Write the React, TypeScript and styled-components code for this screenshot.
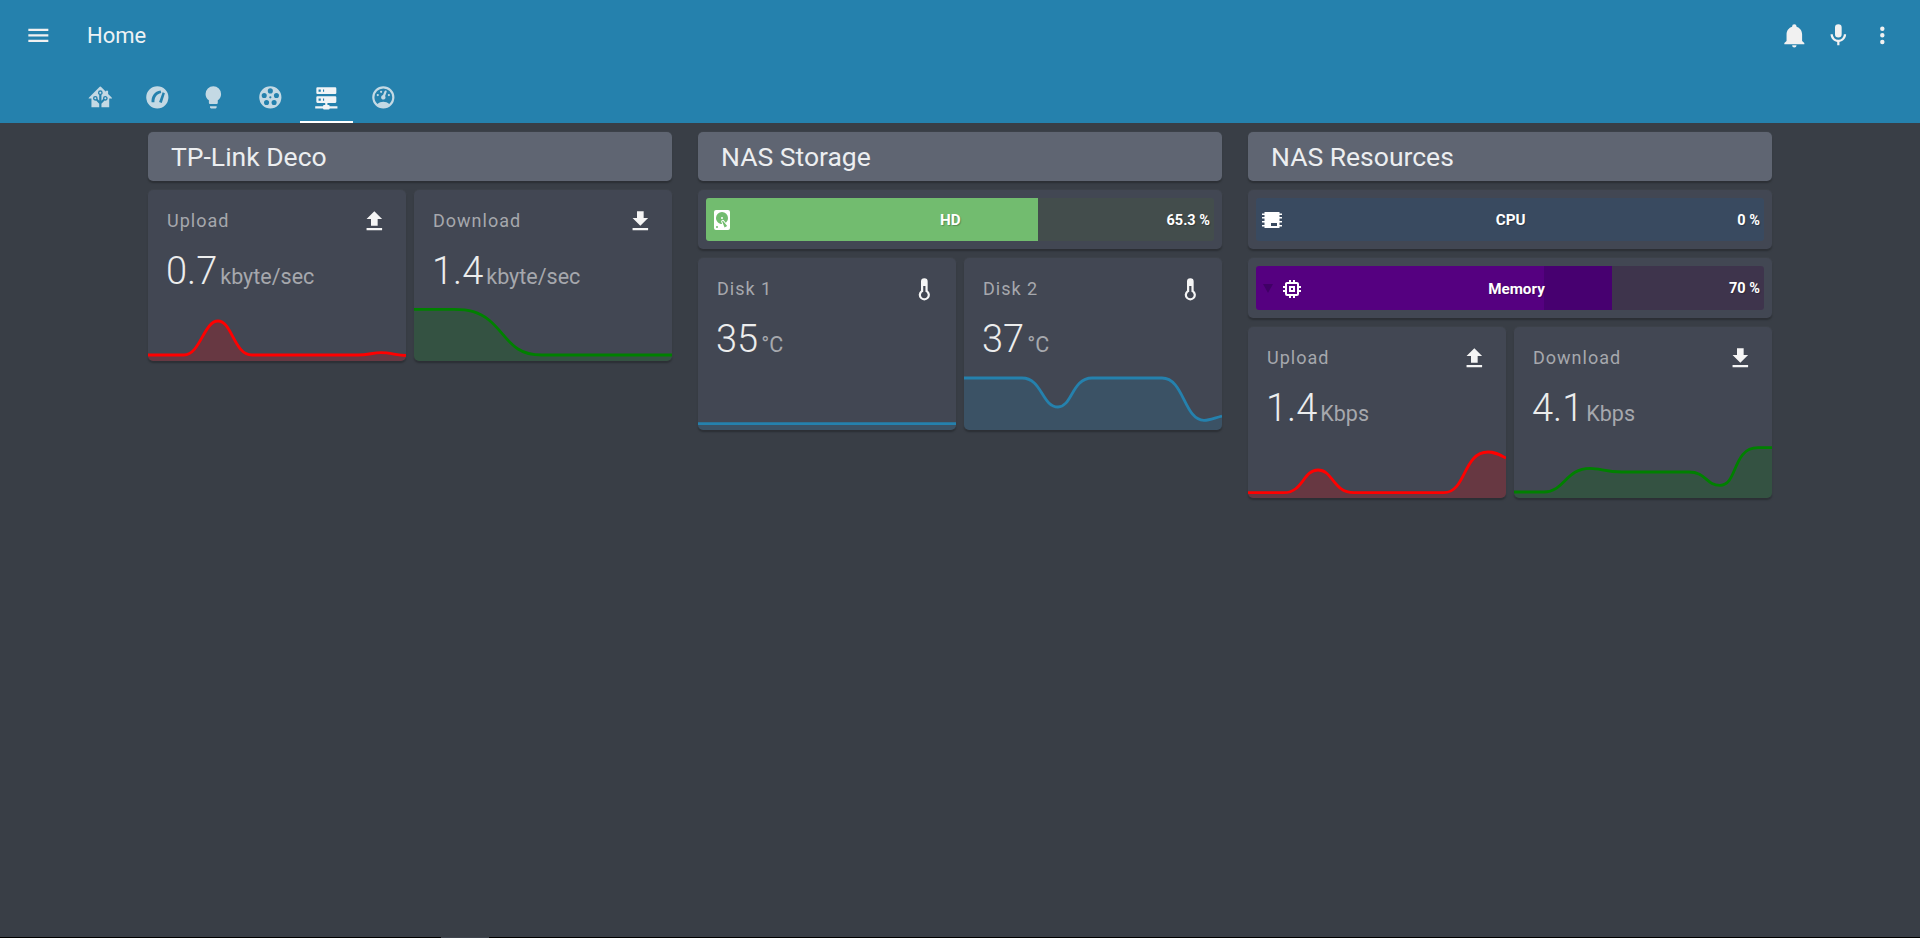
import React from 'react';
import styled, { createGlobalStyle } from 'styled-components';

const ICONS = {
  menu: 'M3,6H21V8H3V6M3,11H21V13H3V11M3,16H21V18H3V16Z',
  bell: 'M21,19V20H3V19L5,17V11C5,7.9 7.03,5.17 10,4.29C10,4.19 10,4.1 10,4A2,2 0 0,1 12,2A2,2 0 0,1 14,4C14,4.1 14,4.19 14,4.29C16.97,5.17 19,7.9 19,11V17L21,19M14,21A2,2 0 0,1 12,23A2,2 0 0,1 10,21',
  mic: 'M12,2A3,3 0 0,1 15,5V11A3,3 0 0,1 12,14A3,3 0 0,1 9,11V5A3,3 0 0,1 12,2M19,11C19,14.53 16.39,17.44 13,17.93V21H11V17.93C7.61,17.44 5,14.53 5,11H7A5,5 0 0,0 12,16A5,5 0 0,0 17,11H19Z',
  dots: 'M12,16A2,2 0 0,1 14,18A2,2 0 0,1 12,20A2,2 0 0,1 10,18A2,2 0 0,1 12,16M12,10A2,2 0 0,1 14,12A2,2 0 0,1 12,14A2,2 0 0,1 10,12A2,2 0 0,1 12,10M12,4A2,2 0 0,1 14,6A2,2 0 0,1 12,8A2,2 0 0,1 10,6A2,2 0 0,1 12,4Z',
  homeAssistant: 'M21.8,13H20V21H13V17.67L15.79,14.88L16.5,15C17.66,15 18.6,14.06 18.6,12.9C18.6,11.74 17.66,10.8 16.5,10.8A2.1,2.1 0 0,0 14.4,12.9L14.5,13.61L13,15.13V9.65C13.66,9.29 14.1,8.6 14.1,7.8A2.1,2.1 0 0,0 12,5.7A2.1,2.1 0 0,0 9.9,7.8C9.9,8.6 10.34,9.29 11,9.65V15.13L9.5,13.61L9.6,12.9A2.1,2.1 0 0,0 7.5,10.8A2.1,2.1 0 0,0 5.4,12.9A2.1,2.1 0 0,0 7.5,15L8.21,14.88L11,17.67V21H4V13H2.25C1.83,13 1.42,13 1.42,12.79C1.43,12.57 1.85,12.15 2.28,11.72L11,3C11.33,2.67 11.67,2.33 12,2.33C12.33,2.33 12.67,2.67 13,3L17,7V6H19V9L21.78,11.78C22.18,12.18 22.59,12.59 22.6,12.8C22.6,13 22.2,13 21.8,13M7.5,12A0.9,0.9 0 0,1 8.4,12.9A0.9,0.9 0 0,1 7.5,13.8A0.9,0.9 0 0,1 6.6,12.9A0.9,0.9 0 0,1 7.5,12M16.5,12C17,12 17.4,12.4 17.4,12.9C17.4,13.4 17,13.8 16.5,13.8A0.9,0.9 0 0,1 15.6,12.9A0.9,0.9 0 0,1 16.5,12M12,6.9C12.5,6.9 12.9,7.3 12.9,7.8C12.9,8.3 12.5,8.7 12,8.7C11.5,8.7 11.1,8.3 11.1,7.8C11.1,7.3 11.5,6.9 12,6.9Z',
  bulb: 'M12,2A7,7 0 0,0 5,9C5,11.38 6.19,13.47 8,14.74V17A1,1 0 0,0 9,18H15A1,1 0 0,0 16,17V14.74C17.81,13.47 19,11.38 19,9A7,7 0 0,0 12,2M9,21A1,1 0 0,0 10,22H14A1,1 0 0,0 15,21V20H9V21Z',
  reel: 'M12 2a10 10 0 1 0 0 20a10 10 0 1 0 0-20ZM9.7 6.2a2.3 2.3 0 1 0 4.6 0a2.3 2.3 0 1 0-4.6 0ZM4.2 10.3a2.3 2.3 0 1 0 4.6 0a2.3 2.3 0 1 0-4.6 0ZM15.2 10.3a2.3 2.3 0 1 0 4.6 0a2.3 2.3 0 1 0-4.6 0ZM6.3 16.7a2.3 2.3 0 1 0 4.6 0a2.3 2.3 0 1 0-4.6 0ZM13.1 16.7a2.3 2.3 0 1 0 4.6 0a2.3 2.3 0 1 0-4.6 0ZM11 12a1 1 0 1 0 2 0a1 1 0 1 0-2 0Z',
  server: 'M13,19H14A1,1 0 0,1 15,20H22V22H15A1,1 0 0,1 14,23H10A1,1 0 0,1 9,22H2V20H9A1,1 0 0,1 10,19H11V17H4A1,1 0 0,1 3,16V12A1,1 0 0,1 4,11H20A1,1 0 0,1 21,12V16A1,1 0 0,1 20,17H13V19M4,3H20A1,1 0 0,1 21,4V8A1,1 0 0,1 20,9H4A1,1 0 0,1 3,8V4A1,1 0 0,1 4,3M9,7H10V5H9V7M9,15H10V13H9V15M5,5V7H7V5H5M5,13V15H7V13H5Z',
  gauge: 'M12,2A10,10 0 0,0 2,12A10,10 0 0,0 12,22A10,10 0 0,0 22,12A10,10 0 0,0 12,2M12,4A8,8 0 0,1 20,12C20,14.4 19,16.5 17.3,18C15.9,16.7 14,16 12,16C10,16 8.2,16.7 6.7,18C5,16.5 4,14.4 4,12A8,8 0 0,1 12,4M14,5.89C13.62,5.9 13.26,6.15 13.1,6.54L11.81,9.77L11.71,10C11,10.13 10.41,10.6 10.14,11.26C9.73,12.29 10.23,13.45 11.26,13.86C12.29,14.27 13.45,13.77 13.86,12.74C14.12,12.08 14,11.32 13.57,10.76L13.67,10.5L14.96,7.29L14.97,7.26C15.17,6.75 14.92,6.17 14.41,5.96C14.28,5.91 14.15,5.89 14,5.89M10,6A1,1 0 0,0 9,7A1,1 0 0,0 10,8A1,1 0 0,0 11,7A1,1 0 0,0 10,6M7,9A1,1 0 0,0 6,10A1,1 0 0,0 7,11A1,1 0 0,0 8,10A1,1 0 0,0 7,9M17,9A1,1 0 0,0 16,10A1,1 0 0,0 17,11A1,1 0 0,0 18,10A1,1 0 0,0 17,9Z',
  dial: 'M12 2a10 10 0 1 0 0 20a10 10 0 1 0 0-20ZM6.8 16.5C6.4 11 9.4 6.6 15 5.8L15.5 8C11.4 8.8 9.2 12 9.4 16.5ZM16.8 7.5L18.8 8.3L16 17L13.6 16.2Z',
  upload: 'M9,16V10H5L12,3L19,10H15V16H9M5,20V18H19V20H5Z',
  download: 'M5,20H19V18H5M19,9H15V3H9V9H5L12,16L19,9Z',
  thermometer: 'M15 13V5A3 3 0 0 0 9 5V13A5 5 0 1 0 15 13ZM13 9V14.2A3 3 0 1 1 11 14.2V9Z',
  harddisk: 'M6,2H18A2,2 0 0,1 20,4V20A2,2 0 0,1 18,22H6A2,2 0 0,1 4,20V4A2,2 0 0,1 6,2M12,4A6,6 0 0,0 6,10C6,13.31 8.69,16 12.1,16L11.22,13.77C10.95,13.29 11.11,12.68 11.59,12.4L12.45,11.9C12.93,11.63 13.54,11.79 13.82,12.27L15.74,14.69C17.12,13.59 18,11.9 18,10A6,6 0 0,0 12,4M12,9A1,1 0 0,1 13,10A1,1 0 0,1 12,11A1,1 0 0,1 11,10A1,1 0 0,1 12,9M7,18A1,1 0 0,0 6,19A1,1 0 0,0 7,20A1,1 0 0,0 8,19A1,1 0 0,0 7,18M12.09,13.27L14.58,19.58L17.17,18.08L12.95,12.77L12.09,13.27Z',
  cpu: 'M4.5 4H19.5V5.5H22V7H19.5V9H22V10.5H19.5V13H22V14.5H19.5V17H22V18.5H19.5V20H4.5V18.5H2V17H4.5V14.5H2V13H4.5V10.5H2V9H4.5V7H2V5.5H4.5ZM11 15V18H17V15Z',
  chip: 'M17,17H7V7H17M21,11V9H19V7C19,5.89 18.1,5 17,5H15V3H13V5H11V3H9V5H7C5.89,5 5,5.89 5,7V9H3V11H5V13H3V15H5V17A2,2 0 0,0 7,19H9V21H11V19H13V21H15V19H17A2,2 0 0,0 19,17V15H21V13H19V11M13,13H11V11H13M15,9H9V15H15V9Z',
};

type IconName = keyof typeof ICONS;

const GlobalStyle = createGlobalStyle`
  html, body {
    margin: 0;
    padding: 0;
    background: #393e46;
  }
  body {
    font-family: Roboto, "Liberation Sans", sans-serif;
  }
`;

const Page = styled.div`
  min-height: 938px;
  display: flex;
  flex-direction: column;
`;

const Header = styled.header`
  background: #2581ad;
  color: #f1f1f1;
`;

const Toolbar = styled.div`
  height: 70px;
  display: flex;
  align-items: center;
  padding: 0 16px;
`;

const Title = styled.div`
  flex: 1;
  margin-left: 27px;
  font-size: 22px;
  color: #eef2f5;
`;

const IconButton = styled.div`
  width: 44px;
  height: 44px;
  display: flex;
  align-items: center;
  justify-content: center;
`;

const Tabs = styled.div`
  height: 53px;
  display: flex;
  padding: 1px 0 0 72px;
  box-sizing: border-box;
`;

const Tab = styled.div<{ $active?: boolean }>`
  position: relative;
  width: 56.6px;
  display: flex;
  align-items: center;
  justify-content: center;
  color: ${(p) => (p.$active ? '#f1f4f6' : '#c4d9e4')};

  &::after {
    content: '';
    display: ${(p) => (p.$active ? 'block' : 'none')};
    position: absolute;
    left: 2px;
    right: 2px;
    bottom: 0;
    height: 2px;
    background: #fff;
  }
`;

const Svg = styled.svg<{ $size: number }>`
  display: block;
  flex: none;
  width: ${(p) => p.$size}px;
  height: ${(p) => p.$size}px;
  fill: currentColor;
`;

const Main = styled.main`
  flex: 1;
  display: grid;
  grid-template-columns: repeat(3, 524px);
  justify-content: center;
  align-items: start;
  gap: 26px;
  padding-top: 9px;
`;

const Column = styled.section`
  display: flex;
  flex-direction: column;
  gap: 8.9px;
`;

const cardLook = `
  border-radius: 5px;
  box-shadow: 0 2px 2px rgba(0, 0, 0, 0.28), 0 0 0 1px rgba(255, 255, 255, 0.02);
`;

const SectionTitle = styled.h2`
  ${cardLook}
  margin: 0;
  height: 49px;
  display: flex;
  align-items: center;
  padding-left: 23px;
  background: #5f6572;
  color: #eceef0;
  font-size: 26.5px;
  font-weight: 400;
`;

const SensorRow = styled.div`
  display: grid;
  grid-template-columns: 1fr 1fr;
  gap: 8px;
`;

const SensorCard = styled.div`
  ${cardLook}
  height: 171.5px;
  display: flex;
  flex-direction: column;
  overflow: hidden;
  background: #424753;
`;

const SensorHead = styled.div`
  display: flex;
  align-items: center;
  justify-content: space-between;
  padding: 18px 18px 0 19px;
  color: #f5f5f5;
`;

const SensorName = styled.div`
  padding-bottom: 2px;
  color: #a6a8ad;
  font-size: 18px;
  letter-spacing: 1px;
`;

const SensorValue = styled.div`
  display: flex;
  align-items: baseline;
  padding: 14px 0 0 18px;
  color: #eceded;
  font-size: 38px;
  font-weight: 300;
`;

const SensorUnit = styled.span`
  margin-left: 3px;
  color: #a6a8ad;
  font-size: 21.5px;
  font-weight: 400;
`;

const Graph = styled.svg`
  display: block;
  width: 100%;
  margin-top: auto;
`;

const BarCard = styled.div`
  ${cardLook}
  height: 59.6px;
  box-sizing: border-box;
  padding: 8px;
  background: #424753;
`;

const BarTrack = styled.div<{ $stops: string }>`
  height: 100%;
  display: flex;
  align-items: center;
  padding: 1px 4px 0 4px;
  box-sizing: border-box;
  border-radius: 3px;
  color: #fff;
  font-size: 14.5px;
  font-weight: 700;
  text-shadow: 1px 1px 1px rgba(0, 0, 0, 0.25);
  background: linear-gradient(to right, ${(p) => p.$stops});
`;

const BarLabel = styled.div`
  flex: 1;
  text-align: center;
  font-size: 15.2px;
`;

const Caret = styled.span`
  flex: none;
  width: 0;
  height: 0;
  margin: 0 7px 0 3px;
  border-left: 5px solid transparent;
  border-right: 5px solid transparent;
  border-top: 9px solid #400066;
`;

const BottomEdge = styled.div`
  height: 1px;
  display: flex;
`;

const EdgeLine = styled.div<{ $width?: number }>`
  height: 1px;
  background: #000;
  flex: ${(p) => (p.$width ? `0 0 ${p.$width}px` : '1')};
`;

const EdgeGap = styled.div`
  flex: 0 0 48px;
  background: #3f444c;
`;

const Icon = ({ name, size = 26.67 }: { name: IconName; size?: number }) => (
  <Svg $size={size} viewBox="0 0 24 24">
    <path d={ICONS[name]} fillRule="evenodd" />
  </Svg>
);

const Sparkline = ({ line, color }: { line: string; color: string }) => (
  <Graph viewBox="0 0 258 60">
    <path d={`${line} V60 H0 Z`} fill={color} fillOpacity={0.2} />
    <path d={line} fill="none" stroke={color} strokeWidth={2.8} />
  </Graph>
);

interface SensorProps {
  name: string;
  icon: IconName;
  value: string;
  unit: string;
  line: string;
  color: string;
}

const Sensor = ({ name, icon, value, unit, line, color }: SensorProps) => (
  <SensorCard>
    <SensorHead>
      <SensorName>{name}</SensorName>
      <Icon name={icon} />
    </SensorHead>
    <SensorValue>
      {value}
      <SensorUnit>{unit}</SensorUnit>
    </SensorValue>
    <Sparkline line={line} color={color} />
  </SensorCard>
);

interface BarProps {
  icon: IconName;
  label: string;
  value: string;
  stops: string;
  caret?: boolean;
}

const Bar = ({ icon, label, value, stops, caret }: BarProps) => (
  <BarCard>
    <BarTrack $stops={stops}>
      {caret && <Caret />}
      <Icon name={icon} size={24} />
      <BarLabel>{label}</BarLabel>
      <div>{value}</div>
    </BarTrack>
  </BarCard>
);

const RED = '#ff0000';
const GREEN = '#008000';
const BLUE = '#2581ad';

const tabs: IconName[] = ['homeAssistant', 'dial', 'bulb', 'reel', 'server', 'gauge'];

const App = () => (
  <Page>
    <GlobalStyle />
    <Header>
      <Toolbar>
        <IconButton>
          <Icon name="menu" />
        </IconButton>
        <Title>Home</Title>
        <IconButton>
          <Icon name="bell" />
        </IconButton>
        <IconButton>
          <Icon name="mic" />
        </IconButton>
        <IconButton>
          <Icon name="dots" />
        </IconButton>
      </Toolbar>
      <Tabs>
        {tabs.map((name) => (
          <Tab key={name} $active={name === 'server'}>
            <Icon name={name} />
          </Tab>
        ))}
      </Tabs>
    </Header>
    <Main>
      <Column>
        <SectionTitle>TP-Link Deco</SectionTitle>
        <SensorRow>
          <Sensor
            name="Upload"
            icon="upload"
            value="0.7"
            unit="kbyte/sec"
            color={RED}
            line="M0 54 H36 C52 54 56 20 70 20 C84 20 86 54 104 54 H210 C220 54 225 51.7 233 51.7 C242 51.7 248 54 258 54.5"
          />
          <Sensor
            name="Download"
            icon="download"
            value="1.4"
            unit="kbyte/sec"
            color={GREEN}
            line="M0 8.3 H40 C55 8.3 65 11 75 19 C88 30 92 40 104 48 C110 52 118 54 128 54 H258"
          />
        </SensorRow>
      </Column>
      <Column>
        <SectionTitle>NAS Storage</SectionTitle>
        <Bar icon="harddisk" label="HD" value="65.3 %" stops="#72bc6f 65.3%, #434d4c 65.3%" />
        <SensorRow>
          <Sensor name="Disk 1" icon="thermometer" value="35" unit="°C" color={BLUE} line="M0 53.7 H258" />
          <Sensor
            name="Disk 2"
            icon="thermometer"
            value="37"
            unit="°C"
            color={BLUE}
            line="M0 8 H58 C78 8 78 37 94 37 C108 37 108 8 128 8 H198 C220 8 220 50.3 240 50.3 C246 50.3 250 48 258 46"
          />
        </SensorRow>
      </Column>
      <Column>
        <SectionTitle>NAS Resources</SectionTitle>
        <Bar icon="cpu" label="CPU" value="0 %" stops="#394a60 0%, #394a60 100%" />
        <Bar
          icon="chip"
          label="Memory"
          value="70 %"
          caret
          stops="#550080 56.7%, #470070 56.7%, #470070 70%, #3e344c 70%"
        />
        <SensorRow>
          <Sensor
            name="Upload"
            icon="upload"
            value="1.4"
            unit="Kbps"
            color={RED}
            line="M0 54.7 H36 C55 54.7 55 32 70 32 C85 32 85 54.7 106 54.7 H196 C218 54.7 215 14 240 14 C247 14 250 16 258 20"
          />
          <Sensor
            name="Download"
            icon="download"
            value="4.1"
            unit="Kbps"
            color={GREEN}
            line="M0 54 H30 C50 54 52 30.3 76 30.3 C86 30.3 92 34 108 34 H175 C192 34 192 47.3 206 47.3 C224 47.3 218 9.7 244 9.7 H258"
          />
        </SensorRow>
      </Column>
    </Main>
    <BottomEdge>
      <EdgeLine $width={441} />
      <EdgeGap />
      <EdgeLine />
    </BottomEdge>
  </Page>
);

export default App;
